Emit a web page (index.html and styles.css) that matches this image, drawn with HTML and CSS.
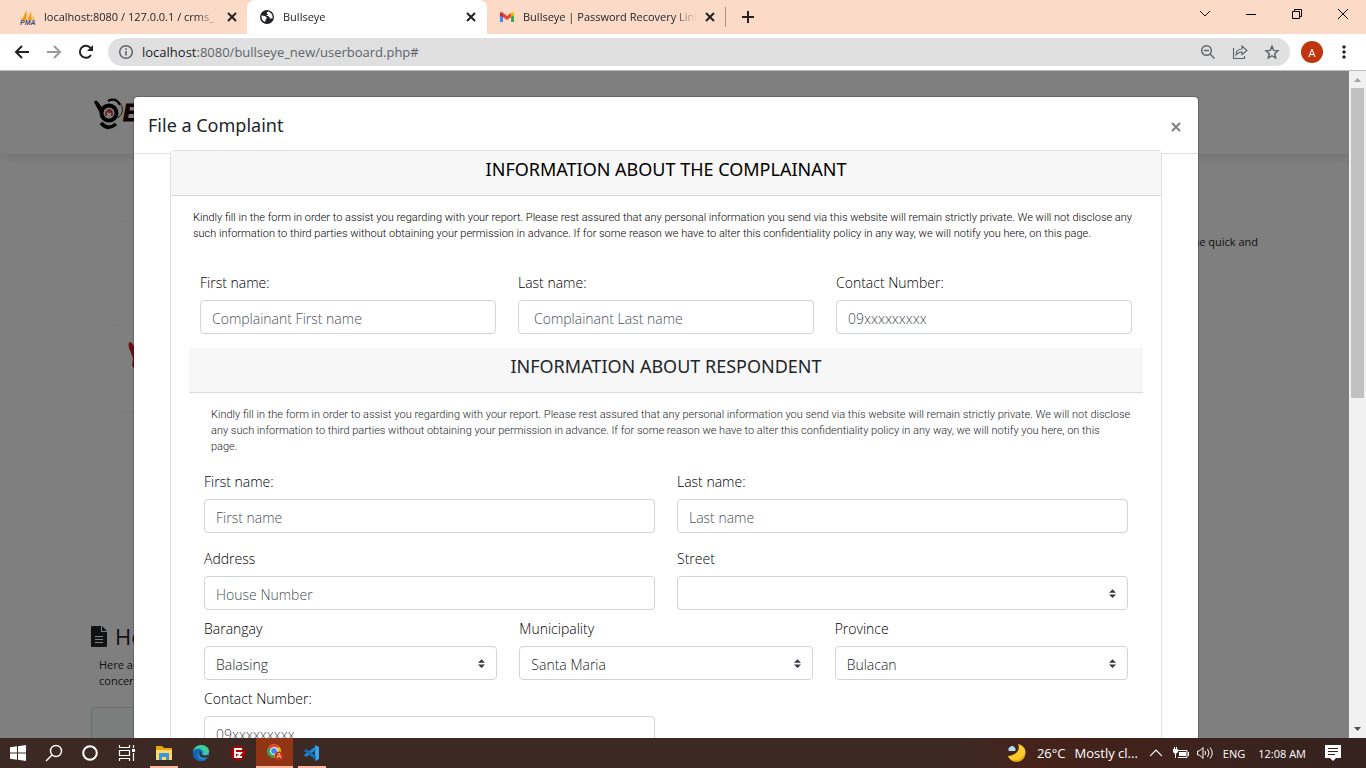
FILE: index.html
```html
<!DOCTYPE html>
<html lang="en">
<head>
<meta charset="utf-8">
<title>Bullseye</title>
<link rel="stylesheet" href="styles.css">
</head>
<body>
<div class="screen">
  <div class="tabs">
    <div class="tab tab-first">
      <svg class="fav" width="16" height="16" viewBox="0 0 16 16"><path d="M1 11C3 9 5 5 6 1c1 3 1 7 0 10zM7 11c2-2 3-5 3-9 2 3 2 6 2 9z" fill="#f89c0e"/><path d="M10 2l5 9h-3z" fill="#fbc36b"/><text x="0" y="16" class="pma">PMA</text></svg>
      <span class="tab-title">localhost:8080 / 127.0.0.1 / crms_</span>
      <button class="icon-btn tab-x" aria-label="Close tab"><svg width="10" height="10" viewBox="0 0 10 10"><path d="M1 1l8 8M9 1l-8 8" stroke="#222" stroke-width="2"/></svg></button>
    </div>
    <div class="tab tab-active">
      <svg class="fav" width="16" height="16" viewBox="0 0 16 16"><circle cx="8" cy="8" r="7" fill="#202124"/><path d="M2.500 6.500L6 7l2 2-1 1-1 3c-2-1-4-3-3.500-6.500zM9 2.500L7.500 4 9 5.500l-2 1 3 1 1 2h2.500c.8-3-1.500-6.500-4.500-7z" fill="#fff"/></svg>
      <span class="tab-title">Bullseye</span>
      <button class="icon-btn tab-x" aria-label="Close tab"><svg width="10" height="10" viewBox="0 0 10 10"><path d="M1 1l8 8M9 1l-8 8" stroke="#222" stroke-width="2"/></svg></button>
    </div>
    <div class="tab tab-mail">
      <svg class="fav" width="16" height="16" viewBox="0 0 16 16"><path d="M1 4v9h3V6z" fill="#4285f4"/><path d="M15 4v9h-3V6z" fill="#34a853"/><path d="M12 4l2-1.300 1 1V6l-3 2z" fill="#fbbc04"/><path d="M1 6V3.700L2.500 2.600 8 7l4-3v4l-4 3-4-3z" fill="#ea4335"/><path d="M1 4l3 2v2L1 6z" fill="#c5221f"/></svg>
      <span class="tab-title">Bullseye | Password Recovery Link</span>
      <button class="icon-btn tab-x" aria-label="Close tab"><svg width="10" height="10" viewBox="0 0 10 10"><path d="M1 1l8 8M9 1l-8 8" stroke="#222" stroke-width="2"/></svg></button>
    </div>
    <span class="tab-rule"></span>
    <button class="icon-btn new-tab" aria-label="New tab"><svg width="12" height="12" viewBox="0 0 12 12"><path d="M6 0v12M0 6h12" stroke="#222" stroke-width="2"/></svg></button>
    <div class="window-tools">
      <button class="icon-btn" aria-label="Search tabs"><svg width="12" height="12" viewBox="0 0 12 12"><path d="M1 3l5 5 5-5" fill="none" stroke="#111"/></svg></button>
      <button class="icon-btn" aria-label="Minimize"><svg width="12" height="12" viewBox="0 0 12 12"><path d="M1 6.500h10" stroke="#000"/></svg></button>
      <button class="icon-btn" aria-label="Restore"><svg width="12" height="12" viewBox="0 0 12 12"><path d="M1.500 3.500h7v7h-7zM3.500 3.500v-2h7v7h-2" fill="none" stroke="#000"/></svg></button>
      <button class="icon-btn" aria-label="Close"><svg width="12" height="12" viewBox="0 0 12 12"><path d="M1 1l10 10M11 1L1 11" stroke="#000"/></svg></button>
    </div>
  </div>

  <div class="toolbar">
    <button class="icon-btn" aria-label="Back"><svg width="16" height="16" viewBox="0 0 16 16"><path d="M15 8H2M8 2L2 8l6 6" fill="none" stroke="#202124" stroke-width="2"/></svg></button>
    <button class="icon-btn" aria-label="Forward"><svg width="16" height="16" viewBox="0 0 16 16"><path d="M1 8h13M8 2l6 6-6 6" fill="none" stroke="#9a9a9a" stroke-width="2"/></svg></button>
    <button class="icon-btn" aria-label="Reload"><svg width="16" height="16" viewBox="0 0 16 16"><path d="M13 11a6 6 0 1 1-.5-7" fill="none" stroke="#202124" stroke-width="2"/><path d="M15 1v6H9z" fill="#202124"/></svg></button>
    <div class="omnibox">
      <svg width="16" height="16" viewBox="0 0 16 16"><circle cx="8" cy="8" r="6.300" fill="none" stroke="#5f6368" stroke-width="1.500"/><path d="M8 7v4.500M8 4.300v1.600" stroke="#5f6368" stroke-width="1.600"/></svg>
      <span class="url"><b>localhost</b>:8080/bullseye_new/userboard.php#</span>
      <button class="icon-btn" aria-label="Zoom"><svg width="16" height="16" viewBox="0 0 16 16"><circle cx="6.500" cy="6.500" r="4.800" fill="none" stroke="#5f6368" stroke-width="1.400"/><path d="M4 6.500h5M10 10l4.500 4.500" stroke="#5f6368" stroke-width="1.400"/></svg></button>
      <button class="icon-btn" aria-label="Share"><svg width="16" height="16" viewBox="0 0 16 16"><path d="M1.500 4v10.500H12.500V12M4 11c0-4 2-6 6-6V2l5 4.500-5 4V8C7 8 5.500 9 4 11z" fill="none" stroke="#5f6368" stroke-width="1.100"/></svg></button>
      <button class="icon-btn" aria-label="Bookmark"><svg width="16" height="16" viewBox="0 0 16 16"><path d="M8 2.200l1.700 4.200 4.300.4-3.300 2.900 1 4.300L8 11.700 4.300 14l1-4.300L2 6.800l4.300-.4z" fill="none" stroke="#5f6368" stroke-width="1.400"/></svg></button>
    </div>
    <button class="avatar">A</button>
    <button class="icon-btn menu" aria-label="Menu"><svg width="4" height="14" viewBox="0 0 4 14"><g fill="#202124"><circle cx="2" cy="2" r="1.700"/><circle cx="2" cy="7" r="1.700"/><circle cx="2" cy="12" r="1.700"/></g></svg></button>
  </div>

  <main class="viewport">
    <div class="page">
      <header class="site-header">
        <svg class="logo" width="50" height="34" viewBox="0 0 50 34"><circle cx="16" cy="15" r="7.500" fill="#fff" stroke="#000" stroke-width="4"/><path d="M1 4q2-3 4 0l6 8-3 5z" fill="#000"/><path d="M8 25q7 8 15 1" fill="none" stroke="#000" stroke-width="3.500"/><path d="M15 3q8-4 12 4" fill="none" stroke="#000" stroke-width="2"/><path d="M27 5q6 8-2 15" fill="none" stroke="#333"/><path d="M13 18v-3q3-6 6-1v4M15 14h3" fill="none" stroke="#d22" stroke-width="1.500"/><text x="30" y="23" class="logo-text">B</text></svg>
      </header>
      <div class="hero">
        <svg class="art" width="30" height="200" viewBox="0 0 30 200"><g fill="none" stroke="#f4f4f4"><path d="M17 2h13M17 2v6h13M17 101h13M17 101v5h-8v6h21M17 193h13"/></g><path d="M30 130c-3-9-8-9-6-1l4 10-1 8 3 3z" fill="#d9181f"/></svg>
        <p class="hero-text">the quick and</p>
      </div>
      <section class="news">
        <h2><svg width="16" height="21" viewBox="0 0 16 21"><path d="M1 0h9v6h6v14a1 1 0 0 1-1 1H1a1 1 0 0 1-1-1V1a1 1 0 0 1 1-1zM11 0l5 5h-5z" fill="#212529"/><path d="M4 10.500h8M4 13.500h8M4 16.500h8" stroke="#fff"/></svg>He</h2>
        <p>Here are<br>concern</p>
        <div class="news-card"></div>
      </section>
    </div>
    <div class="backdrop">
      <form class="modal">
        <div class="modal-head">
          <h1>File a Complaint</h1>
          <button type="button" class="icon-btn close" aria-label="Close"><svg width="10" height="10" viewBox="0 0 10 10"><path d="M1 1l8 8M9 1l-8 8" stroke="#7f7f7f" stroke-width="2"/></svg></button>
        </div>
        <div class="card">
          <h2 class="card-head dark">INFORMATION ABOUT THE COMPLAINANT</h2>
          <p class="note dark">Kindly fill in the form in order to assist you regarding with your report. Please rest assured that any personal information you send via this website will remain strictly private. We will not disclose any<br>such information to third parties without obtaining your permission in advance. If for some reason we have to alter this confidentiality policy in any way, we will notify you here, on this page.</p>
          <div class="row three first-row">
            <div class="field"><label for="cf">First name:</label><input id="cf" type="text" placeholder="Complainant First name"></div>
            <div class="field"><label for="cl">Last name:</label><input id="cl" class="indent" type="text" placeholder="Complainant Last name"></div>
            <div class="field"><label for="cn">Contact Number:</label><input id="cn" type="text" placeholder="09xxxxxxxxx"></div>
          </div>
          <div class="respondent">
            <h2 class="card-head">INFORMATION ABOUT RESPONDENT</h2>
            <p class="note">Kindly fill in the form in order to assist you regarding with your report. Please rest assured that any personal information you send via this website will remain strictly private. We will not disclose<br>any such information to third parties without obtaining your permission in advance. If for some reason we have to alter this confidentiality policy in any way, we will notify you here, on this<br>page.</p>
            <div class="rows">
              <div class="row two names">
                <div class="field"><label for="rf">First name:</label><input id="rf" type="text" placeholder="First name"></div>
                <div class="field"><label for="rl">Last name:</label><input id="rl" type="text" placeholder="Last name"></div>
              </div>
              <div class="row two">
                <div class="field"><label for="ad">Address</label><input id="ad" type="text" placeholder="House Number"></div>
                <div class="field"><label for="st">Street</label><select id="st"><option></option></select></div>
              </div>
              <div class="row three">
                <div class="field"><label for="br">Barangay</label><select id="br"><option>Balasing</option></select></div>
                <div class="field"><label for="mu">Municipality</label><select id="mu"><option>Santa Maria</option></select></div>
                <div class="field"><label for="pr">Province</label><select id="pr"><option>Bulacan</option></select></div>
              </div>
              <div class="row two">
                <div class="field"><label for="rn">Contact Number:</label><input id="rn" type="text" placeholder="09xxxxxxxxx"></div>
              </div>
            </div>
          </div>
        </div>
      </form>
    </div>
    <div class="scrollbar">
      <svg width="17" height="17" viewBox="0 0 17 17"><path d="M5 11l3.500-4 3.500 4z" fill="#a3a3a3"/></svg>
      <div class="thumb"></div>
      <svg class="down" width="17" height="17" viewBox="0 0 17 17"><path d="M5 6l3.500 4L12 6z" fill="#505050"/></svg>
    </div>
  </main>

  <footer class="taskbar">
    <button class="task" aria-label="Start"><svg width="16" height="16" viewBox="0 0 16 16"><path d="M0 2.300L7 1.300v6.200H0zM8 1.200L16 0v7.500H8zM0 8.500h7v6.200l-7-1zM8 8.500h8V16l-8-1.200z" fill="#fff"/></svg></button>
    <button class="task" aria-label="Search"><svg width="18" height="18" viewBox="0 0 18 18"><circle cx="11" cy="7" r="5.500" fill="none" stroke="#fff" stroke-width="1.400"/><path d="M7 11l-6 6" stroke="#fff" stroke-width="1.400"/></svg></button>
    <button class="task" aria-label="Cortana"><svg width="18" height="18" viewBox="0 0 18 18"><circle cx="9" cy="9" r="6.800" fill="none" stroke="#fff" stroke-width="2"/></svg></button>
    <button class="task" aria-label="Task view"><svg width="18" height="16" viewBox="0 0 18 16"><path d="M1.500 0v2.500h10V0M1.500 5.500h10v5h-10zM1.500 16v-2.500h10V16M15.500 0v3M15.500 8v8" fill="none" stroke="#fff" stroke-width="1.200"/><path d="M14 4h3v3h-3z" fill="#fff"/></svg></button>
    <button class="task running" aria-label="File Explorer"><svg width="18" height="16" viewBox="0 0 18 16"><path d="M1 1h6l2 2h8v12H1z" fill="#e8a50c"/><path d="M1 5h16v10H1z" fill="#ffd968"/><path d="M4 8h10v7h-3v-3H7v3H4z" fill="#3a96dd"/></svg></button>
    <button class="task" aria-label="Edge"><svg width="18" height="18" viewBox="0 0 18 18"><circle cx="9" cy="9" r="8" fill="#1b86d6"/><path d="M1 8C2 0 14-2 17 6c1 4-3 6-6 5 2-4-1-6-4-6S2 6 1 8z" fill="#3ccb9a"/><path d="M1 8c1-4 9-5 9 1-3-2-5 1-4 4s5 4 9 2c-6 5-15 1-14-7z" fill="#1267b5"/><path d="M9 8c-2 2 0 6 7 4" fill="none" stroke="#3d2822" stroke-width="2"/></svg></button>
    <button class="task" aria-label="FileZilla"><svg width="18" height="18" viewBox="0 0 18 18"><circle cx="9" cy="9" r="6.500" fill="#b40000"/><circle cx="9" cy="9" r="7" fill="none" stroke="#b40000" stroke-width="2" stroke-dasharray="2 2"/><path d="M6 14V5h7M6 9h6l-4 4h5" fill="none" stroke="#fff" stroke-width="1.800"/></svg></button>
    <button class="task current" aria-label="Chrome"><svg width="18" height="18" viewBox="0 0 18 18"><circle cx="8" cy="8" r="7" fill="#34a853"/><path d="M2 4.500A7 7 0 0 1 14 4.500L8 8z" fill="#ea4335"/><path d="M8 15a7 7 0 0 0 6-10.500H8z" fill="#fbbc04"/><circle cx="8" cy="8" r="3.500" fill="#4285f4" stroke="#fff"/><circle cx="13" cy="13" r="4.500" fill="#c5350d"/><path d="M11 15l2-5 2 5M12 13.500h2" fill="none" stroke="#ddd" stroke-width=".8"/></svg></button>
    <button class="task running" aria-label="Visual Studio Code"><svg width="18" height="18" viewBox="0 0 18 18"><path d="M12 1l4 2v12l-4 2z" fill="#3ba7f0"/><path d="M13 2v4L3 13l-2-2z" fill="#1d8ad3"/><path d="M13 16v-4L3 5 1 7z" fill="#0f74bd"/></svg></button>
    <div class="tray">
      <svg width="20" height="20" viewBox="0 0 20 20"><path d="M12 1c3 6-2 11-10 12 2 5 9 8 14 3 6-5 4-13-4-15z" fill="#fdcc2a"/><path d="M3 15c6 5 15 1 16-6 2 8-9 14-16 6z" fill="#f0a30c"/><path d="M3 8a2.500 2.500 0 0 1 1-4 3 3 0 0 1 5 1 2 2 0 0 1 0 3z" fill="#b5dcf5"/></svg>
      <span class="weather"><span>26°C</span><span>Mostly cl...</span></span>
      <svg class="chevron" width="12" height="8" viewBox="0 0 12 8"><path d="M0 7l6-6 6 6" fill="none" stroke="#fff" stroke-width="1.200"/></svg>
      <svg width="16" height="12" viewBox="0 0 16 12"><path d="M5 3.500h9v7H5M15.500 5v4" fill="none" stroke="#fff"/><path d="M6 5h7v4H6zM0 2h5v3L3.500 6.500h-2L0 5zM1 0h1v2H1zM3 0h1v2H3zM2 6h1v5H2z" fill="#fff"/></svg>
      <svg width="17" height="14" viewBox="0 0 17 14"><path d="M.5 5h2L6 1.500v11L2.500 9h-2zM8 5q1.500 2 0 4M10.500 3q3 4 0 8M13 1.500q4.500 5.500 0 11" fill="none" stroke="#fff"/></svg>
      <span class="lang">ENG</span>
      <span class="clock">12:08 AM</span>
      <svg width="16" height="16" viewBox="0 0 16 16"><path d="M0 0h16v13h-5l-3 3-3-3H0z" fill="#fff"/><path d="M3 3.500h10M3 6.500h10M3 9.500h7" stroke="#35211c"/></svg>
    </div>
  </footer>
</div>
</body>
</html>
```

FILE: styles.css
```css
* { box-sizing: border-box; }
body { margin: 0; font-family: "Open Sans", "Noto Sans", sans-serif; color: #212529; }
h1, h2, p { margin: 0; }
button { font-family: inherit; }
svg { flex: none; display: block; }
.screen { display: flex; flex-direction: column; height: 100vh; overflow: hidden; }
.icon-btn { display: flex; align-items: center; justify-content: center; padding: 0; border: 0; background: none; }

/* Browser tabs */
.tabs { display: flex; align-items: stretch; height: 34px; flex: none; background: #fcdac8; font-size: 11px; }
.tab { display: flex; align-items: center; gap: 8px; width: 240px; padding: 0 11px 0 12px; }
.tab-first { width: 247px; padding: 0 10px 0 20px; border-radius: 0 0 8px 0; }
.tab-active { background: #fff; border-radius: 8px 8px 0 0; }
.tab-mail { width: 238px; padding-right: 10px; border-radius: 0 0 0 8px; }
.tab-title { flex: 1; padding-bottom: 1px; white-space: nowrap; overflow: hidden; mask-image: linear-gradient(to left, transparent, #000 24px); }
.tab-rule { width: 1px; height: 20px; margin: 7px 16px 0 0; background: #a8948a; }
.pma { font: italic bold 7px "Liberation Sans", sans-serif; fill: #444a7c; }
.window-tools { display: flex; gap: 34px; margin-left: auto; padding: 0 17px 6px 0; }

/* Address bar */
.toolbar { display: flex; align-items: center; gap: 16px; height: 37px; flex: none; padding: 0 17px 0 14px; border-bottom: 1px solid #bbb; background: #fff; }
.omnibox { flex: 1; display: flex; align-items: center; gap: 16px; height: 28px; margin-right: -5px; margin-left: -2px; padding: 0 10px; border-radius: 14px; background: #e0e0e0; }
.url { flex: 1; margin-left: -8px; font-size: 13px; color: #5f6368; }
.url b { font-weight: 400; color: #202124; }
.avatar { width: 22px; height: 22px; padding: 0; border: 0; border-radius: 50%; background: #c0350d; color: #fff; font-size: 11px; }
.menu { width: 10px; }

/* Page behind the dialog */
.viewport { position: relative; display: flex; flex: 1; min-height: 0; overflow: hidden; }
.page { flex: 1; background: #fff; overflow: hidden; }
.site-header { height: 83px; padding: 27px 0 0 93px; box-shadow: 0 2px 10px rgba(0, 0, 0, .12); }
.logo-text { font: italic bold 24px "Liberation Sans", sans-serif; fill: #210000; stroke: #210000; }
.hero { display: flex; justify-content: space-between; height: 469px; padding: 65px 91px 0 105px; }
.hero-text { padding-top: 15px; font-size: 11px; line-height: 16px; }
.news { padding: 0 91px; }
.news h2 { display: flex; align-items: center; gap: 8px; font-size: 22px; font-weight: 400; line-height: 26px; }
.news p { padding: 8px; font-size: 11px; line-height: 16px; }
.news-card { width: 50%; height: 80px; margin-top: 10px; border: 1px solid #d5dedd; border-radius: 4px; background: #f4fdfb; }
.scrollbar { display: flex; flex-direction: column; width: 17px; background: #f1f1f1; }
.thumb { width: 13px; height: 310px; margin: 0 2px; background: #c1c1c1; }
.down { margin-top: auto; }

/* Dialog */
.backdrop { position: absolute; inset: 0 17px 0 0; padding: 26px 151px 0 134px; background: rgba(0, 0, 0, .5); overflow: hidden; }
.modal { min-height: 100%; margin: 0; border-radius: 4px; background: #fff; box-shadow: 0 0 0 1px rgba(0, 0, 0, .2); }
.modal-head { display: flex; justify-content: space-between; align-items: center; height: 57px; padding: 0 17px 0 14px; border-bottom: 1px solid #dee2e6; }
.modal-head h1 { font-family: "Noto Sans", sans-serif; font-size: 18px; font-weight: 400; }
.close { padding-top: 3px; }
.card { position: relative; margin: -4px 36px 0; border: 1px solid #dfdfdf; border-radius: 4px; background: #fff; }
.card-head { height: 45px; padding-top: 5px; border-bottom: 1px solid #d9d9d9; background: #f7f7f7; font-family: "Noto Sans", sans-serif; font-size: 18px; font-weight: 400; line-height: 26px; text-align: center; }
.dark { color: #000; }
.note { padding: 14px 22px 0; font-family: Roboto, sans-serif; font-size: 11px; font-weight: 300; line-height: 16px; white-space: nowrap; }
.row { display: grid; gap: 22px; }
.two { grid-template-columns: repeat(2, 1fr); }
.three { grid-template-columns: repeat(3, 1fr); }
.first-row { margin: 30px 29px 14px; }
.respondent { margin: 0 18px; }
.rows { display: flex; flex-direction: column; gap: 8px; padding: 16px 15px; }
.names { margin-bottom: 7px; }
.field { display: flex; flex-direction: column; gap: 6px; min-width: 0; }
.field label { font-size: 14px; font-weight: 300; line-height: 22px; color: #000; }
.field input, .field select { width: 100%; height: 34px; padding: 2px 11px 0; border: 1px solid #ced4da; border-radius: 4px; background: #fff; font-family: inherit; font-size: 14px; font-weight: 300; color: #212529; }
.field .indent { padding-left: 15px; }
.field input::placeholder { color: #495057; opacity: 1; }
.field select { appearance: none; background: #fff url("data:image/svg+xml,%3Csvg xmlns='http://www.w3.org/2000/svg' viewBox='0 0 4 5'%3E%3Cpath fill='%23343a40' d='M2 0L0 2h4zm0 5L0 3h4z'/%3E%3C/svg%3E") no-repeat right 11px center / 7px 9px; }

/* Desktop taskbar */
.taskbar { display: flex; height: 30px; flex: none; background: linear-gradient(90deg, #3d2924, #3d2924 70%, #45221a 76%, #35231f); color: #fff; }
.task { display: flex; align-items: center; justify-content: center; width: 37px; padding: 0; border: 0; background: none; }
.task:nth-child(-n+3) { width: 36px; }
.running { background: linear-gradient(#f9b79b, #f9b79b) center bottom / 28px 2px no-repeat; }
.current { border-bottom: 2px solid #f9b79b; background: #913415; }
.tray { display: flex; align-items: center; gap: 8px; margin-left: auto; padding-right: 25px; font-size: 12px; white-space: nowrap; }
.weather { display: flex; gap: 9px; margin: 0 4px 0 3px; font-size: 13px; }
.chevron { margin-right: 3px; }
.clock { margin: 0 11px 0 5px; }
.lang { margin-left: 1px; }
.lang, .clock { font-size: 11px; }
```
